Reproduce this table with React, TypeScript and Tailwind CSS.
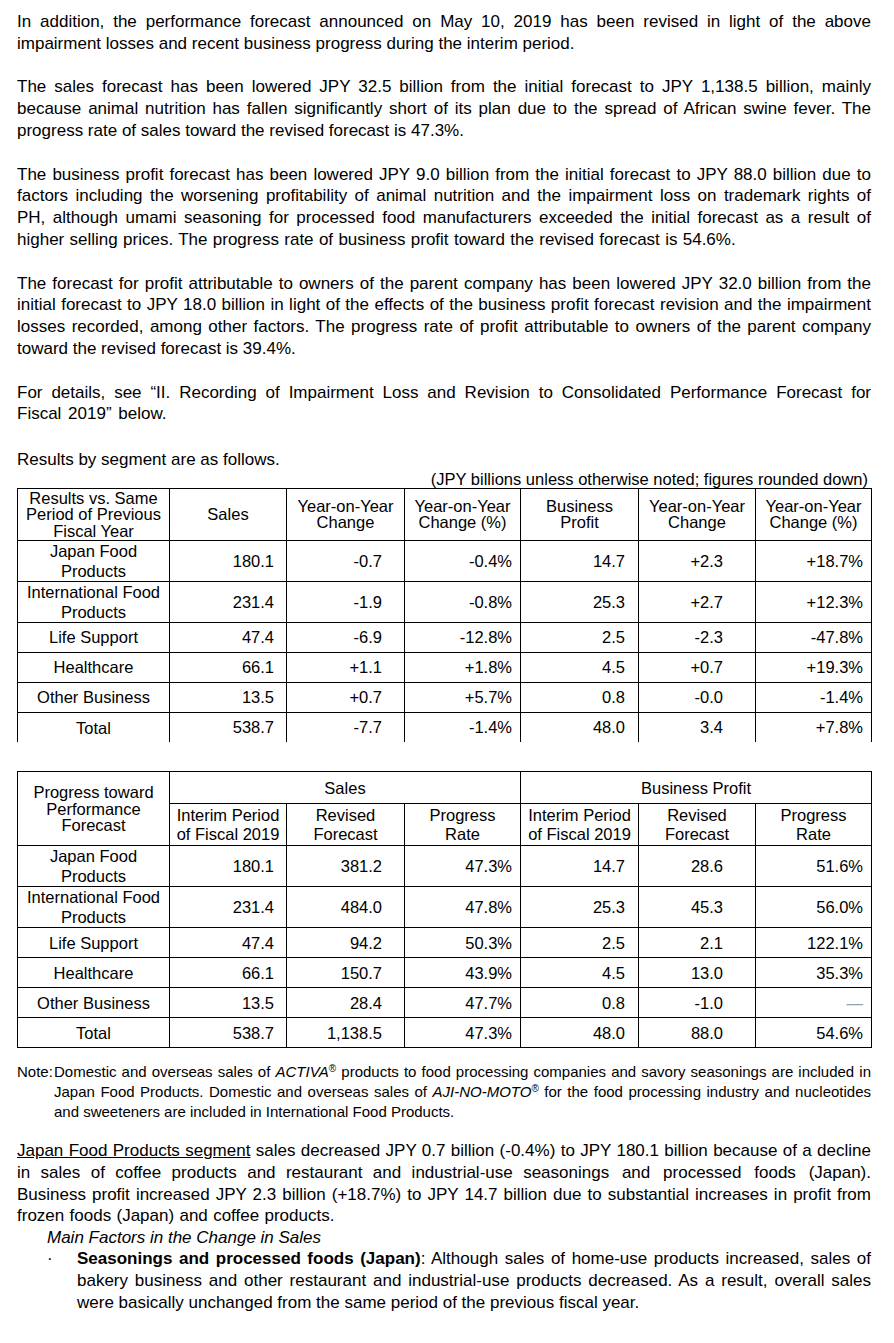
const font = { fontFamily: '"Liberation Sans", Arial, sans-serif' };

type Row = { name: string[]; v: string[]; dash?: boolean };

const rows1: Row[] = [
  { name: ['Japan Food', 'Products'], v: ['180.1', '-0.7', '-0.4%', '14.7', '+2.3', '+18.7%'] },
  { name: ['International Food', 'Products'], v: ['231.4', '-1.9', '-0.8%', '25.3', '+2.7', '+12.3%'] },
  { name: ['Life Support'], v: ['47.4', '-6.9', '-12.8%', '2.5', '-2.3', '-47.8%'] },
  { name: ['Healthcare'], v: ['66.1', '+1.1', '+1.8%', '4.5', '+0.7', '+19.3%'] },
  { name: ['Other Business'], v: ['13.5', '+0.7', '+5.7%', '0.8', '-0.0', '-1.4%'] },
  { name: ['Total'], v: ['538.7', '-7.7', '-1.4%', '48.0', '3.4', '+7.8%'] },
];

const rows2: Row[] = [
  { name: ['Japan Food', 'Products'], v: ['180.1', '381.2', '47.3%', '14.7', '28.6', '51.6%'] },
  { name: ['International Food', 'Products'], v: ['231.4', '484.0', '47.8%', '25.3', '45.3', '56.0%'] },
  { name: ['Life Support'], v: ['47.4', '94.2', '50.3%', '2.5', '2.1', '122.1%'] },
  { name: ['Healthcare'], v: ['66.1', '150.7', '43.9%', '4.5', '13.0', '35.3%'] },
  { name: ['Other Business'], v: ['13.5', '28.4', '47.7%', '0.8', '-1.0', ''], dash: true },
  { name: ['Total'], v: ['538.7', '1,138.5', '47.3%', '48.0', '88.0', '54.6%'] },
];

// right padding per value column, read off the reference
const pads = ['pr-3', 'pr-[22px]', 'pr-2', 'pr-[13px]', 'pr-8', 'pr-2'];

function Cols() {
  return (
    <colgroup>
      <col className="w-[152px]" />
      <col className="w-[117px]" />
      <col className="w-[118px]" />
      <col className="w-[116px]" />
      <col className="w-[118px]" />
      <col className="w-[117px]" />
      <col className="w-[116px]" />
    </colgroup>
  );
}

function Body({ rows, open }: { rows: Row[]; open?: boolean }) {
  return (
    <tbody>
      {rows.map((r, i) => {
        const last = i === rows.length - 1;
        const h = r.name.length > 1 ? 'h-[41px]' : 'h-[30px]';
        const b = open && last ? 'border border-b-0 border-black' : 'border border-black';
        return (
          <tr key={r.name.join(' ')} className={h}>
            <td className={`${b} text-center leading-[20px] p-0`}>
              {r.name.map((n) => (
                <div key={n}>{n}</div>
              ))}
            </td>
            {r.v.map((v, j) => (
              <td key={j} className={`${b} text-right p-0 ${pads[j]}`}>
                {r.dash && j === 5 ? <span className="text-gray-400">―</span> : v}
              </td>
            ))}
          </tr>
        );
      })}
    </tbody>
  );
}

export default function App() {
  const th = 'border border-black font-normal text-center p-0';
  return (
    <div className="w-[894px] min-h-[1343px] bg-white text-black pl-[17px] pr-[23px] pt-[11px]" style={font}>
      <div className="text-[17px] leading-[21.8px] text-justify">
        <p>
          In addition, the performance forecast announced on May 10, 2019 has been revised in light of the above impairment losses and recent business progress during the interim period.
        </p>
        <p className="mt-[21.8px]">
          The sales forecast has been lowered JPY 32.5 billion from the initial forecast to JPY 1,138.5 billion, mainly because animal nutrition has fallen significantly short of its plan due to the spread of African swine fever. The progress rate of sales toward the revised forecast is 47.3%.
        </p>
        <p className="mt-[21.8px] [word-spacing:0.6px]">
          The business profit forecast has been lowered JPY 9.0 billion from the initial forecast to JPY 88.0 billion due to factors including the worsening profitability of animal nutrition and the impairment loss on trademark rights of PH, although umami seasoning for processed food manufacturers exceeded the initial forecast as a result of higher selling prices. The progress rate of business profit toward the revised forecast is 54.6%.
        </p>
        <p className="mt-[21.8px]">
          The forecast for profit attributable to owners of the parent company has been lowered JPY 32.0 billion from the initial forecast to JPY 18.0 billion in light of the effects of the business profit forecast revision and the impairment losses recorded, among other factors. The progress rate of profit attributable to owners of the parent company toward the revised forecast is 39.4%.
        </p>
        <p className="mt-[21.8px] [word-spacing:2px]">
          For details, see “II. Recording of Impairment Loss and Revision to Consolidated Performance Forecast for Fiscal 2019” below.
        </p>
        <p className="mt-[24px]">Results by segment are as follows.</p>
      </div>

      <div className="text-right text-[16.5px] leading-[17px] pr-[3px]">
        (JPY billions unless otherwise noted; figures rounded down)
      </div>

      <table className="table-fixed border-collapse w-[854px] text-[16.5px]">
        <Cols />
        <thead>
          <tr className="h-[52px] leading-[16.5px]">
            <th className={th}>
              Results vs. Same
              <br />
              Period of Previous
              <br />
              Fiscal Year
            </th>
            <th className={th}>Sales</th>
            <th className={th}>
              Year-on-Year
              <br />
              Change
            </th>
            <th className={th}>
              Year-on-Year
              <br />
              Change (%)
            </th>
            <th className={th}>
              Business
              <br />
              Profit
            </th>
            <th className={th}>
              Year-on-Year
              <br />
              Change
            </th>
            <th className={th}>
              Year-on-Year
              <br />
              Change (%)
            </th>
          </tr>
        </thead>
        <Body rows={rows1} open />
      </table>

      <table className="table-fixed border-collapse w-[854px] text-[16.5px] mt-[29px]">
        <Cols />
        <thead>
          <tr className="h-[32px]">
            <th rowSpan={2} className={`${th} leading-[16.5px]`}>
              Progress toward
              <br />
              Performance
              <br />
              Forecast
            </th>
            <th colSpan={3} className={th}>Sales</th>
            <th colSpan={3} className={th}>Business Profit</th>
          </tr>
          <tr className="h-[42px] leading-[19px]">
            <th className={th}>
              Interim Period
              <br />
              of Fiscal 2019
            </th>
            <th className={th}>
              Revised
              <br />
              Forecast
            </th>
            <th className={th}>
              Progress
              <br />
              Rate
            </th>
            <th className={th}>
              Interim Period
              <br />
              of Fiscal 2019
            </th>
            <th className={th}>
              Revised
              <br />
              Forecast
            </th>
            <th className={th}>
              Progress
              <br />
              Rate
            </th>
          </tr>
        </thead>
        <Body rows={rows2} />
      </table>

      <div className="flex mt-[14px] text-[15px] leading-[20px]">
        <span className="w-[37px] shrink-0">Note:</span>
        <p className="text-justify">
          Domestic and overseas sales of <i>ACTIVA</i>
          <sup className="text-[10px] leading-none">®</sup> products to food processing companies and savory seasonings are included in Japan Food Products. Domestic and overseas sales of <i>AJI-NO-MOTO</i>
          <sup className="text-[10px] leading-none">®</sup> for the food processing industry and nucleotides and sweeteners are included in International Food Products.
        </p>
      </div>

      <div className="mt-[18px] text-[17px] leading-[21.6px]">
        <p className="text-justify [word-spacing:0.6px]">
          <span className="underline">Japan Food Products segment</span> sales decreased JPY 0.7 billion (-0.4%) to JPY 180.1 billion because of a decline in sales of coffee products and restaurant and industrial-use{' '}
          <span className="[word-spacing:3px]">seasonings and processed foods (Japan). Business</span> profit increased JPY 2.3 billion (+18.7%) to JPY 14.7 billion due to substantial increases in profit from frozen foods (Japan) and coffee products.
        </p>
        <p className="pl-[30px] italic">Main Factors in the Change in Sales</p>
        <div className="flex pl-[30px]">
          <span className="w-[30px] shrink-0">·</span>
          <p className="text-justify">
            <b>Seasonings and processed foods (Japan)</b>: Although sales of home-use products increased, sales of bakery business and other restaurant and industrial-use products decreased. As a result, overall sales were basically unchanged from the same period of the previous fiscal year.
          </p>
        </div>
      </div>
    </div>
  );
}
